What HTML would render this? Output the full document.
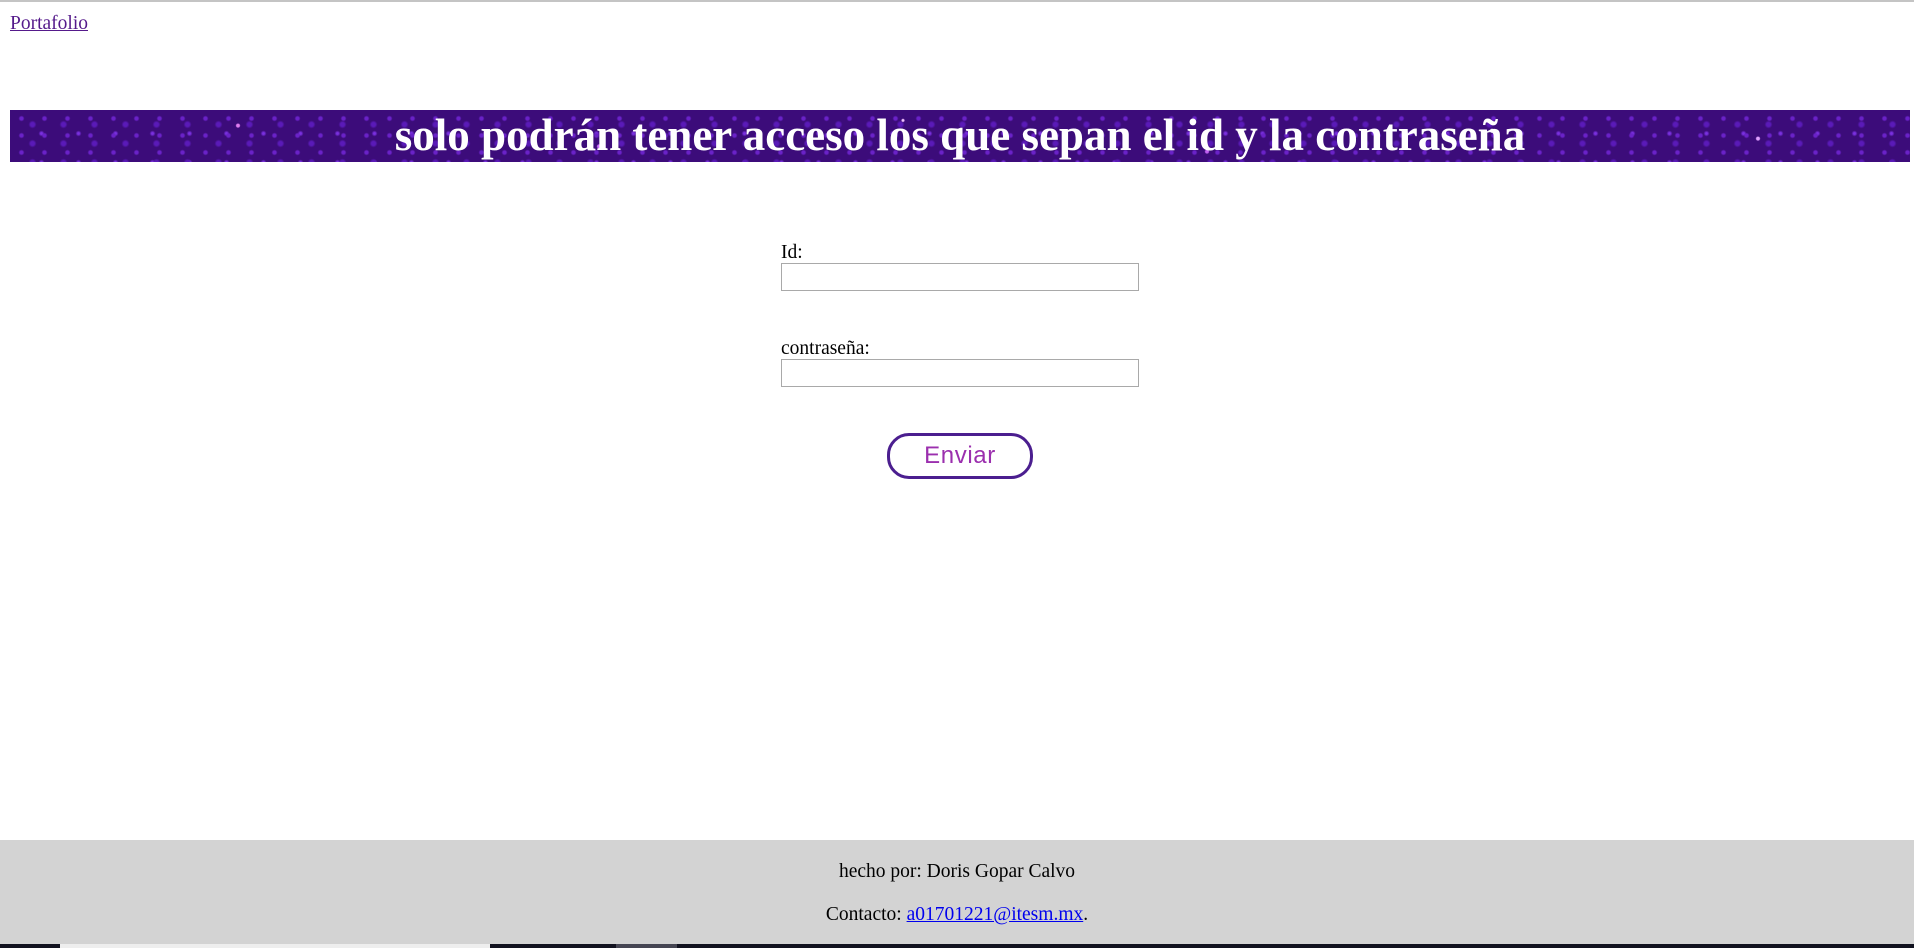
<!DOCTYPE html>
<html><head><meta charset="utf-8"><style>
html,body{margin:0;padding:0;background:#fff;width:1914px;height:948px;overflow:hidden;position:relative;font-family:"Liberation Serif",serif;}
.top{position:absolute;left:0;top:0;width:1914px;height:2px;background:#c4c4c4;}
a.p{position:absolute;left:10px;top:13px;font-size:19.5px;color:#551a8b;}
.banner{position:absolute;left:10px;top:110px;width:1900px;height:52px;overflow:hidden;
background:
radial-gradient(circle at 12% 30%,#e07cf0 0 1.5px,transparent 2.5px),
radial-gradient(circle at 31% 70%,#d070ff 0 1.5px,transparent 2.5px),
radial-gradient(circle at 47% 20%,#f0c0ff 0 1px,transparent 2px),
radial-gradient(circle at 78% 40%,#fff 0 1.5px,transparent 2.5px),
radial-gradient(circle at 92% 55%,#e0a0ff 0 1.5px,transparent 2.5px),
radial-gradient(circle at 63% 80%,#c060f0 0 1.5px,transparent 2.5px),
radial-gradient(circle,#6a22c8 0 1.5px,transparent 3px) 0 0/23px 17px,
radial-gradient(circle,#5a1ab8 0 2px,transparent 4px) 7px 5px/31px 19px,
radial-gradient(circle,#7a30e0 0 1px,transparent 3px) 13px 9px/37px 29px,
#3c0c7a;}
.banner h1{margin:0;text-align:center;color:#fff;font-size:45px;line-height:50px;font-weight:bold;}
label{position:absolute;left:781px;font-size:19.5px;color:#000;}
.in{position:absolute;left:781px;width:356px;height:26px;border:1px solid #a9a9a9;background:#fff;}
.btn{position:absolute;left:887px;top:433px;width:140px;height:40px;border:3px solid #4b1e8f;border-radius:22px;text-align:center;line-height:40px;font-family:"Liberation Sans",sans-serif;font-size:24px;color:#9b2fae;letter-spacing:0.6px;}
.foot{position:absolute;left:0;top:840px;width:1914px;height:104px;background:#d3d3d3;text-align:center;font-size:19.5px;color:#000;}
.foot p{position:absolute;left:0;width:100%;margin:0;}
.foot a{color:#0000ee;}
.task{position:absolute;left:0;top:944px;width:1914px;height:4px;background:#11121f;}
</style></head><body>
<div class="top"></div>
<a class="p" href="#">Portafolio</a>
<div class="banner"><h1>solo podrán tener acceso los que sepan el id y la contraseña</h1></div>
<label style="top:242px">Id:</label>
<div class="in" style="top:263px"></div>
<label style="top:338px">contraseña:</label>
<div class="in" style="top:359px"></div>
<div class="btn">Enviar</div>
<div class="foot">
<p style="top:21px">hecho por: Doris Gopar Calvo</p>
<p style="top:64px">Contacto: <a href="#">a01701221@itesm.mx</a>.</p>
</div>
<div class="task"><div style="position:absolute;left:60px;width:430px;height:4px;background:#eee"></div><div style="position:absolute;left:616px;width:61px;height:4px;background:#454552"></div></div>
</body></html>
